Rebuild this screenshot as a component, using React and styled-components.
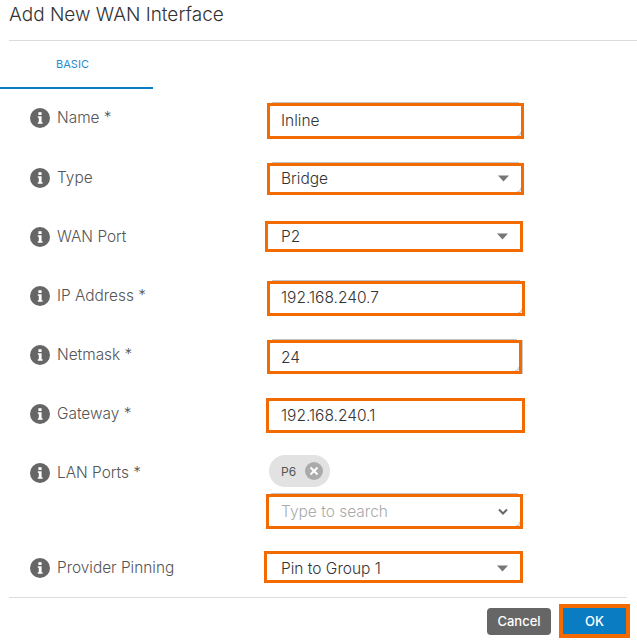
import React from 'react';
import styled, { createGlobalStyle } from 'styled-components';

const GlobalStyle = createGlobalStyle`
  html, body {
    margin: 0;
    background: #fff;
    font-family: "Inter", "Liberation Sans", sans-serif;
  }
`;

const Dialog = styled.div`
  width: 637px;
  height: 641px;
  overflow: hidden;
  display: flex;
  flex-direction: column;
`;

const Header = styled.div`
  height: 41px;
  margin-left: 9px;
  border-bottom: 1px solid #dcdcdc;
  display: flex;
  align-items: center;
  padding-bottom: 11px;
  box-sizing: border-box;
  font-size: 19px;
  font-weight: 300;
  color: #333;
`;

const TabBar = styled.div`
  height: 48px;
  flex: none;
`;

const Tab = styled.div`
  width: 153px;
  height: 48px;
  box-sizing: border-box;
  border-bottom: 2px solid #0a7cc2;
  display: flex;
  justify-content: center;
  align-items: center;
  padding-right: 8px;
  padding-bottom: 1px;
  font-size: 11px;
  color: #1f8dd0;
`;

const Form = styled.div`
  flex: 1;
  padding-top: 16px;
`;

const Row = styled.div`
  display: grid;
  grid-template-columns: 264px 1fr;
  height: ${p => p.$height || 59}px;
`;

const Label = styled.div`
  padding-left: 30px;
  height: 24px;
  display: flex;
  align-items: center;
  gap: 7px;
  font-size: 15.4px;
  font-weight: 300;
  color: #555;

  svg {
    margin-top: 2px;
  }
`;

const FieldCell = styled.div`
  margin-top: ${p => p.$top || 0}px;
`;

const Field = styled.div`
  position: relative;
  width: ${p => p.$width}px;
  height: ${p => p.$height}px;
  margin-left: ${p => p.$x || 0}px;
  box-sizing: border-box;
  border: 3px solid #f26a00;
  display: flex;
  align-items: center;
  justify-content: space-between;
  padding: ${p => (p.$nudge > 0 ? 2 : 0)}px 11px ${p => (p.$nudge < 0 ? 2 : 0)}px ${p => 14 - (p.$x || 0)}px;
  font-size: 15.5px;
  font-weight: 300;
  color: #333;
  box-shadow: ${p => (p.$edge ? '1px 0 0 #ccc' : 'none')};

  /* the input's own grey outline shows just past the highlight */
  &::before {
    content: '';
    position: absolute;
    left: 2px;
    right: 2px;
    top: -4px;
    height: 1px;
    background: ${p => (p.$peek ? '#c4c4c4' : 'transparent')};
  }

  &::after {
    content: '';
    position: absolute;
    right: 0;
    bottom: 0;
    width: 3px;
    height: 3px;
    border-bottom-right-radius: 3px;
    border-right: 1px solid ${p => (p.$peek ? '#ccc' : 'transparent')};
    border-bottom: 1px solid ${p => (p.$peek ? '#ccc' : 'transparent')};
  }
`;

const Placeholder = styled.span`
  color: #aaa;
`;

const Chip = styled.div`
  width: 61px;
  height: 32px;
  margin-left: 5px;
  margin-bottom: 7px;
  border-radius: 16px;
  background: #e2e2e2;
  display: flex;
  align-items: center;
  justify-content: space-between;
  padding: 0 7px 0 12px;
  box-sizing: border-box;
  font-size: 12px;
  color: #555;
`;

const Footer = styled.div`
  margin: 0 10px 3px 9px;
  height: 41px;
  border-top: 1px solid #dcdcdc;
  display: flex;
  justify-content: flex-end;
  align-items: center;
  gap: 8px;
  padding-top: 6px;
  box-sizing: border-box;
`;

const Button = styled.button`
  width: ${p => (p.$primary ? 71 : 64)}px;
  height: ${p => (p.$primary ? 34 : 27)}px;
  box-sizing: border-box;
  border: ${p => (p.$primary ? '4px solid #f26a00' : 'none')};
  margin-right: ${p => (p.$primary ? -3 : 0)}px;
  border-radius: ${p => (p.$primary ? 0 : 4)}px;
  background: ${p => (p.$primary ? '#0a7cc2' : '#666')};
  color: #fff;
  font: 500 13px "Inter", "Liberation Sans", sans-serif;
  padding: 0;
`;

const InfoIcon = () => (
  <svg width="20" height="20" viewBox="0 0 20 20">
    <circle cx="10" cy="10" r="10" fill="#666" />
    <rect x="8.4" y="4.2" width="3.2" height="2.8" fill="#fff" />
    <path d="M7.8 8.2h3.8v6h1v1.5H7.8v-1.5h1v-4.5h-1z" fill="#fff" />
  </svg>
);

const Caret = () => (
  <svg width="13" height="7" viewBox="0 0 13 7">
    <path d="M1 0.5h11L6.5 6.5z" fill="#777" />
  </svg>
);

const Chevron = () => (
  <svg width="12" height="8" viewBox="0 0 12 8">
    <path d="M2 1.5l4 4 4-4" fill="none" stroke="#666" strokeWidth="2" />
  </svg>
);

const ClearIcon = () => (
  <svg width="18" height="18" viewBox="0 0 18 18">
    <circle cx="9" cy="9" r="9" fill="#aaa" />
    <path d="M5.5 5.5l7 7M12.5 5.5l-7 7" stroke="#fff" strokeWidth="2" />
  </svg>
);

const FormLabel = ({ children }) => (
  <Label>
    <InfoIcon />
    {children}
  </Label>
);

export default function App() {
  return (
    <Dialog>
      <GlobalStyle />
      <Header>Add New WAN Interface</Header>
      <TabBar>
        <Tab>BASIC</Tab>
      </TabBar>
      <Form>
        <Row $height={60}>
          <FormLabel>Name *</FormLabel>
          <FieldCell $top={-2}>
            <Field $x={3} $width={257} $height={36} $nudge={-1} $peek>Inline</Field>
          </FieldCell>
        </Row>
        <Row>
          <FormLabel>Type</FormLabel>
          <FieldCell $top={-2}>
            <Field $x={3} $width={257} $height={32} $nudge={-1} $peek>Bridge<Caret /></Field>
          </FieldCell>
        </Row>
        <Row>
          <FormLabel>WAN Port</FormLabel>
          <FieldCell $top={-3}>
            <Field $x={1} $width={258} $height={31}>P2<Caret /></Field>
          </FieldCell>
        </Row>
        <Row>
          <FormLabel>IP Address *</FormLabel>
          <FieldCell $top={-2}>
            <Field $x={3} $width={258} $height={35} $nudge={-1} $peek>192.168.240.7</Field>
          </FieldCell>
        </Row>
        <Row>
          <FormLabel>Netmask *</FormLabel>
          <FieldCell $top={-2}>
            <Field $x={3} $width={255} $height={34} $peek $edge>24</Field>
          </FieldCell>
        </Row>
        <Row>
          <FormLabel>Gateway *</FormLabel>
          <FieldCell $top={-3}>
            <Field $x={2} $width={259} $height={35}>192.168.240.1</Field>
          </FieldCell>
        </Row>
        <Row $height={95}>
          <FormLabel>LAN Ports *</FormLabel>
          <FieldCell $top={-5}>
            <Chip>P6<ClearIcon /></Chip>
            <Field $x={2} $width={257} $height={35} $peek>
              <Placeholder>Type to search</Placeholder>
              <Chevron />
            </Field>
          </FieldCell>
        </Row>
        <Row $height={41}>
          <FormLabel>Provider Pinning</FormLabel>
          <FieldCell $top={-4}>
            <Field $width={259} $height={32} $nudge={1}>Pin to Group 1<Caret /></Field>
          </FieldCell>
        </Row>
      </Form>
      <Footer>
        <Button>Cancel</Button>
        <Button $primary>OK</Button>
      </Footer>
    </Dialog>
  );
}
